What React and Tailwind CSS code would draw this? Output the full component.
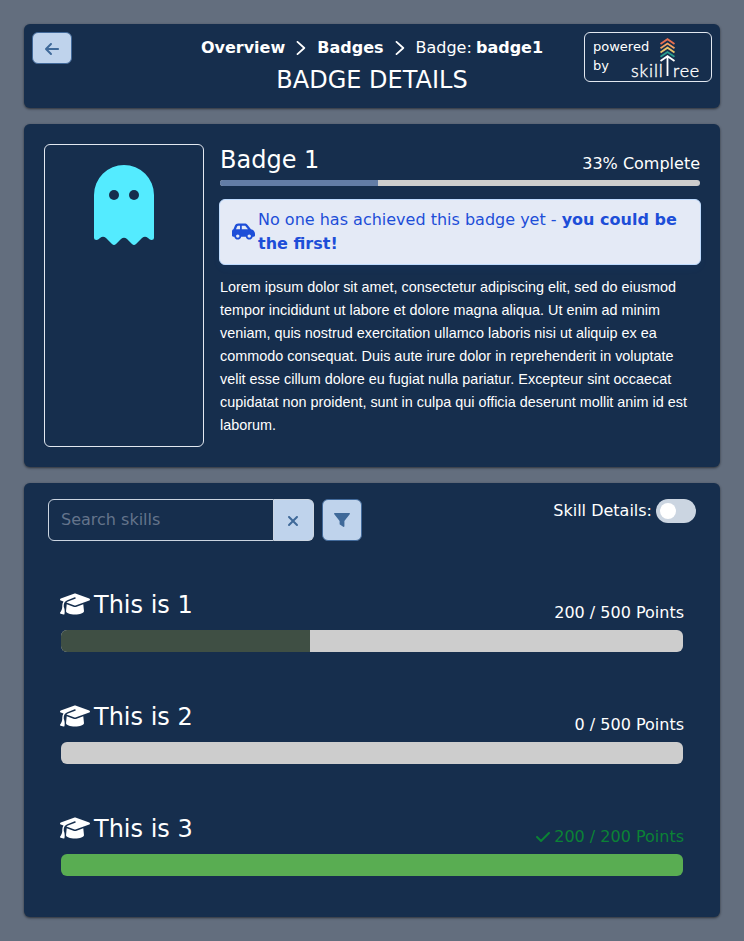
import { FaArrowLeft, FaXmark, FaGraduationCap, FaCheck } from 'react-icons/fa6';

const card = 'rounded-md bg-[#162e4d] shadow-[0_1px_3px_rgba(0,0,0,0.3),0_1px_2px_rgba(0,0,0,0.3)]';

function Separator() {
  return (
    <svg className="mx-[11px] h-[14px] w-[10px]" viewBox="0 0 10 14" fill="none" stroke="white" strokeWidth="1.8" strokeLinecap="round" strokeLinejoin="round">
      <path d="M1.5 0.9 L8.3 7 L1.5 13.1" />
    </svg>
  );
}

function CarIcon() {
  return (
    <svg className="mr-[3px] h-[19px] w-[23px] shrink-0 -translate-y-px" viewBox="0 0 640 512" fill="currentColor" fillRule="evenodd">
      <path d="M171.300 96H224v96H111.300l30.400-75.900C146.500 104 158.200 96 171.300 96zM272 192V96h81.200c9.700 0 18.900 4.400 25 12l67 84H272zm256.200 1L428.200 68c-18.200-22.800-45.800-36-75-36H171.300c-39.300 0-74.600 23.900-89.100 60.300L40.600 196.400C16.800 205.800 0 228.900 0 256v112c0 17.700 14.300 32 32 32h33.300c7.600 45.400 47.100 80 94.700 80s87.100-34.600 94.700-80h130.600c7.600 45.400 47.100 80 94.700 80s87.100-34.600 94.700-80H608c17.700 0 32-14.300 32-32v-48c0-65.200-48.800-119-111.800-127zM480 336a48 48 0 1 1 0 96a48 48 0 1 1 0-96zM160 336a48 48 0 1 1 0 96a48 48 0 1 1 0-96z" />
    </svg>
  );
}

function FunnelIcon() {
  return (
    <svg className="h-[14px] w-4" viewBox="0 0 16 14" fill="currentColor">
      <path d="M.6 0H15.400Q16.300 .3 15.700 1.200L10.400 8V13.200Q10.200 14.200 9.200 13.800L6.200 11.800Q5.600 11.500 5.600 11V8L.3 1.200Q-.3 .3 .6 0Z" />
    </svg>
  );
}

function Logo() {
  return (
    <div className="flex h-[50px] w-32 shrink-0 rounded-md border border-[#e2e8f0] pl-2">
      <div className="w-[38px] pt-1 text-[13px] leading-[19px]">powered<br />by</div>
      <div className="relative flex h-12 w-[70px] items-end pb-[2px] font-['Lato'] text-[18px] leading-[18px] font-light [-webkit-text-stroke:0.35px_white]">
        <span className="w-[36px] tracking-[0.9px]">skill</span>
        <span className="ml-[6px] tracking-[0.8px]">ree</span>
        <svg className="absolute top-[4px] left-[28.500px] h-[40px] w-[17px]" viewBox="0 0 17 40" fill="none" strokeWidth="1.8">
          <path d="M1.5 7 L8.5 2.2 L15.5 7" stroke="#e76f51" />
          <path d="M1.5 11.3 L8.5 6.5 L15.5 11.3" stroke="#f4a261" />
          <path d="M1.5 15.5 L8.5 10.7 L15.5 15.5" stroke="#e9c46a" />
          <path d="M1.5 19.8 L8.5 15 L15.5 19.8" stroke="#2a9d8f" />
          <path d="M1.5 24 L8.5 19.2 L15.5 24 M8.5 19.2 V39" stroke="white" />
        </svg>
      </div>
    </div>
  );
}

function Ghost() {
  return (
    <svg className="h-20 w-[60px]" viewBox="0 0 60 80">
      <path fill="#54ebff" d="M0 30 A30 30 0 0 1 60 30 V73 Q60 75 57.5 75 Q56 75 54 73 Q51 70.5 48 73 L42 79 Q40 81 38 79 L33 74 Q30 71.500 27 74 L22 79 Q20 81 18 79 L12 73 Q9 70.500 6 73 Q4 75 2.500 75 Q0 75 0 73 Z" />
      <circle cx="20" cy="30" r="5" fill="#162e4d" />
      <circle cx="40" cy="30" r="5" fill="#162e4d" />
    </svg>
  );
}

function Skill({ name, points, percent, color, done }) {
  return (
    <div className="mb-[40px] h-[72px] px-3 pt-2">
      <div className="flex h-9 items-start justify-between">
        <div className="flex items-center text-2xl leading-8">
          <FaGraduationCap className="mr-1 h-6 w-[30px] -translate-y-px" />
          {name}
        </div>
        <div className={done ? 'flex items-center pt-3 leading-6 text-[#0b8235]' : 'pt-3 leading-6'}>
          {done && <FaCheck className="mr-[3px] size-4" />}
          {points}
        </div>
      </div>
      <div className="mx-px mt-[5px] h-[22px] overflow-hidden rounded-md bg-[#cdcdcd]">
        <div className={`h-full ${color}`} style={{ width: `${percent}%` }} />
      </div>
    </div>
  );
}

export default function App() {
  return (
    <div className="flex h-[941px] w-[744px] flex-col gap-4 bg-[#636e7e] p-6 font-['DejaVu_Sans',sans-serif] text-base text-white">
      <header className={`flex h-[84px] items-start justify-between p-2 ${card}`}>
        <div className="w-32">
          <button className="flex h-8 w-10 items-center justify-center rounded-md border border-[#41699a] bg-[#bfd3ec] pt-[2px] text-[#3f6999]">
            <FaArrowLeft className="size-4" />
          </button>
        </div>
        <div className="flex flex-col items-center pt-1">
          <nav className="flex items-center leading-6 whitespace-pre">
            <b>Overview</b>
            <Separator />
            <b>Badges</b>
            <Separator />
            <span>Badge: <b className="-ml-px">badge1</b></span>
          </nav>
          <h1 className="mt-1 text-2xl leading-8">BADGE DETAILS</h1>
        </div>
        <Logo />
      </header>

      <section className={`flex h-[343px] gap-4 p-5 ${card}`}>
        <div className="flex h-[303px] w-40 shrink-0 justify-center rounded-md border border-[#e2e8f0] pt-5">
          <Ghost />
        </div>
        <div className="w-[480px]">
          <div className="flex h-9 items-start justify-between">
            <h2 className="text-2xl leading-8">Badge 1</h2>
            <span className="pt-2 leading-6">33% Complete</span>
          </div>
          <div className="h-[6px] overflow-hidden rounded-[3px] bg-[#cdcdcd]">
            <div className="h-full w-[33%] bg-[#637da6]" />
          </div>
          <div className="-mx-px mt-[13px] flex h-[66px] items-center rounded-md border border-[#bfdbfe] bg-[#e4eaf6] pr-3 pl-3 text-[#1d4ed8] shadow-[0_4px_8px_rgba(59,130,246,0.04)]">
            <CarIcon />
            <p className="leading-6">No one has achieved this badge yet - <b>you could be the first!</b></p>
          </div>
          <p className="mt-[11px] font-['Liberation_Sans',sans-serif] text-[14.4px] leading-[23px]">
            Lorem ipsum dolor sit amet, consectetur adipiscing elit, sed do eiusmod tempor incididunt ut labore et dolore magna aliqua. Ut enim ad minim veniam, quis nostrud exercitation ullamco laboris nisi ut aliquip ex ea commodo consequat. Duis aute irure dolor in reprehenderit in voluptate velit esse cillum dolore eu fugiat nulla pariatur. Excepteur sint occaecat cupidatat non proident, sunt in culpa qui officia deserunt mollit anim id est laborum.
          </p>
        </div>
      </section>

      <section className={`h-[434px] px-6 pt-4 ${card}`}>
        <div className="mb-[40px] flex h-[42px] items-start justify-between">
          <div className="flex gap-2">
            <div className="flex h-[42px] w-[266px]">
              <input className="w-[226px] rounded-l-md border border-[#cbd5e1] px-3 placeholder:text-[#64748b]" placeholder="Search skills" />
              <button className="flex w-10 items-center justify-center rounded-r-md border border-l-0 border-[#cbd5e1] bg-[#bfd3ec] text-[#3f6999]">
                <FaXmark className="mt-[2px] mr-px size-4" />
              </button>
            </div>
            <button className="flex h-[42px] w-10 items-center justify-center rounded-md border border-[#41699a] bg-[#bfd3ec] text-[#3f6999]">
              <FunnelIcon />
            </button>
          </div>
          <div className="flex items-center gap-1 leading-6">
            Skill Details:
            <div className="flex h-6 w-10 items-center rounded-full bg-[#cbd5e1] px-1">
              <div className="size-4 rounded-full bg-white" />
            </div>
          </div>
        </div>
        <Skill name="This is 1" points="200 / 500 Points" percent={40} color="bg-[#3f4f44]" />
        <Skill name="This is 2" points="0 / 500 Points" percent={0} color="bg-[#3f4f44]" />
        <Skill name="This is 3" points="200 / 200 Points" percent={100} color="bg-[#59ad52]" done />
      </section>
    </div>
  );
}
